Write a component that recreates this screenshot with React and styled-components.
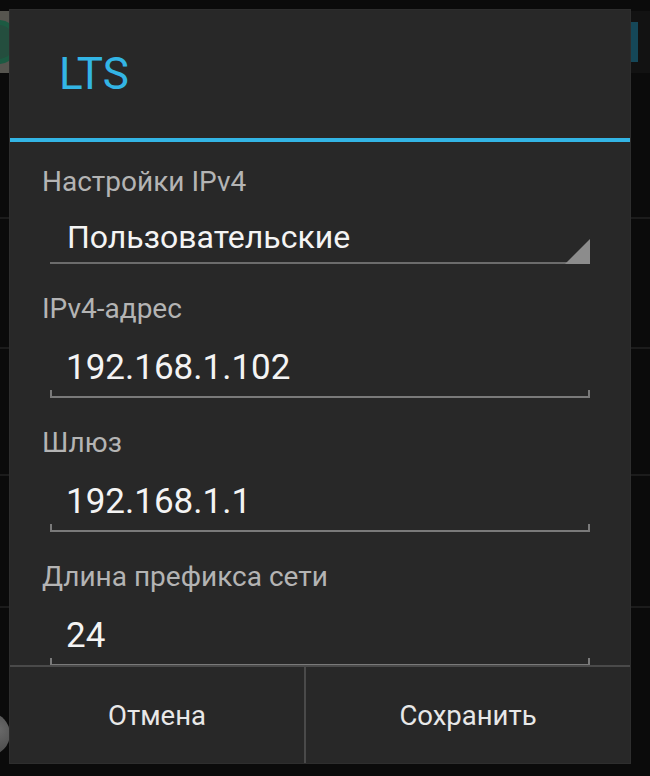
import React from 'react';
import styled, { createGlobalStyle } from 'styled-components';

const GlobalStyle = createGlobalStyle`
  html, body {
    margin: 0;
    padding: 0;
    background: #0b0b0b;
  }
  body {
    font-family: Roboto, "Noto Sans", "Liberation Sans", sans-serif;
  }
`;

const Screen = styled.div`
  position: relative;
  width: 650px;
  height: 776px;
  overflow: hidden;
  background: #0b0b0b;
`;

// dimmed settings list behind the dialog
const Backdrop = styled.div`
  display: flex;
  flex-direction: column;
`;

const ActionBar = styled.div`
  height: 62px;
  margin-top: 11px;
  display: flex;
  justify-content: space-between;
  align-items: center;
  background: #121212;
`;

const AppIcon = styled.div`
  width: 10px;
  height: 62px;
  background: #56554f;
  display: flex;
  align-items: center;
  overflow: hidden;
`;

const Gear = styled.div`
  width: 34px;
  height: 34px;
  margin-left: -24px;
  border-radius: 50%;
  border: 5px solid #1c5a42;
  background: #244e3e;
  flex-shrink: 0;
`;

const TabMark = styled.div`
  width: 8px;
  height: 40px;
  margin-right: 12px;
  background: #154758;
`;

const ListRow = styled.div`
  height: ${p => p.h}px;
  border-bottom: 2px solid #1c1c1c;
`;

const Knob = styled.div`
  width: 40px;
  height: 42px;
  margin: 105px 0 0 -30px;
  border-radius: 50%;
  background: radial-gradient(circle at 70% 40%, #6a6a6a, #3a3a3a);
`;

const Dialog = styled.div`
  position: absolute;
  top: 10px;
  left: 10px;
  width: 620px;
  height: 753px;
  background: #282828;
  display: flex;
  flex-direction: column;
  box-shadow: 0 0 0 1px #2e2e2e;
`;

const Header = styled.div`
  height: 128px;
  display: flex;
  align-items: center;
  padding-left: 49px;
  border-bottom: 4px solid #33b5e5;
`;

const Title = styled.h1`
  margin: 0;
  font-size: 44px;
  font-weight: 400;
  color: #33b5e5;
  line-height: 1;
`;

const Body = styled.div`
  flex: 1;
  overflow: hidden;
  padding: 23px 0 0 32px;
`;

const Label = styled.div`
  font-size: 28px;
  line-height: 34px;
  color: #b4b4b4;
`;

const Spinner = styled.div`
  position: relative;
  width: 540px;
  margin: 14px 0 28px 8px;
  padding: 2px 0 3px 17px;
  box-sizing: border-box;
  border-bottom: 2px solid #6c6c6c;
  font-size: 32px;
  line-height: 44px;
  color: #f4f4f4;

  &::after {
    content: '';
    position: absolute;
    right: 0;
    bottom: -2px;
    border-style: solid;
    border-width: 0 0 25px 25px;
    border-color: transparent transparent #8c8c8c transparent;
  }
`;

const Field = styled.div`
  width: 540px;
  margin: 20px 0 ${p => p.last ? 0 : 28}px 8px;
`;

const Value = styled.div`
  padding-left: 16px;
  font-size: 35px;
  line-height: 44px;
  color: #f4f4f4;
`;

const Underline = styled.div`
  height: 6px;
  border: 2px solid #7a7a7a;
  border-top: none;
`;

const Footer = styled.div`
  height: 96px;
  display: flex;
  border-top: 2px solid #4a4a4a;
`;

const Button = styled.div`
  flex: ${p => p.w ? `0 0 ${p.w}px` : 1};
  display: flex;
  align-items: center;
  justify-content: center;
  font-size: 27.5px;
  color: #e8e8e8;
  & + & {
    border-left: 2px solid #4a4a4a;
  }
`;

const fields = [
  { label: 'IPv4-адрес', value: '192.168.1.102' },
  { label: 'Шлюз', value: '192.168.1.1' },
  { label: 'Длина префикса сети', value: '24' },
];

export default function App() {
  return (
    <>
      <GlobalStyle />
      <Screen>
        <Backdrop>
          <ActionBar>
            <AppIcon><Gear /></AppIcon>
            <TabMark />
          </ActionBar>
          <ListRow h={144} />
          <ListRow h={128} />
          <ListRow h={125} />
          <ListRow h={130} />
          <Knob />
        </Backdrop>

        <Dialog>
          <Header>
            <Title>LTS</Title>
          </Header>
          <Body>
            <Label>Настройки IPv4</Label>
            <Spinner>Пользовательские</Spinner>
            {fields.map((f, i) => (
              <React.Fragment key={f.label}>
                <Label>{f.label}</Label>
                <Field last={i === fields.length - 1}>
                  <Value>{f.value}</Value>
                  <Underline />
                </Field>
              </React.Fragment>
            ))}
          </Body>
          <Footer>
            <Button w={294}>Отмена</Button>
            <Button>Сохранить</Button>
          </Footer>
        </Dialog>
      </Screen>
    </>
  );
}
